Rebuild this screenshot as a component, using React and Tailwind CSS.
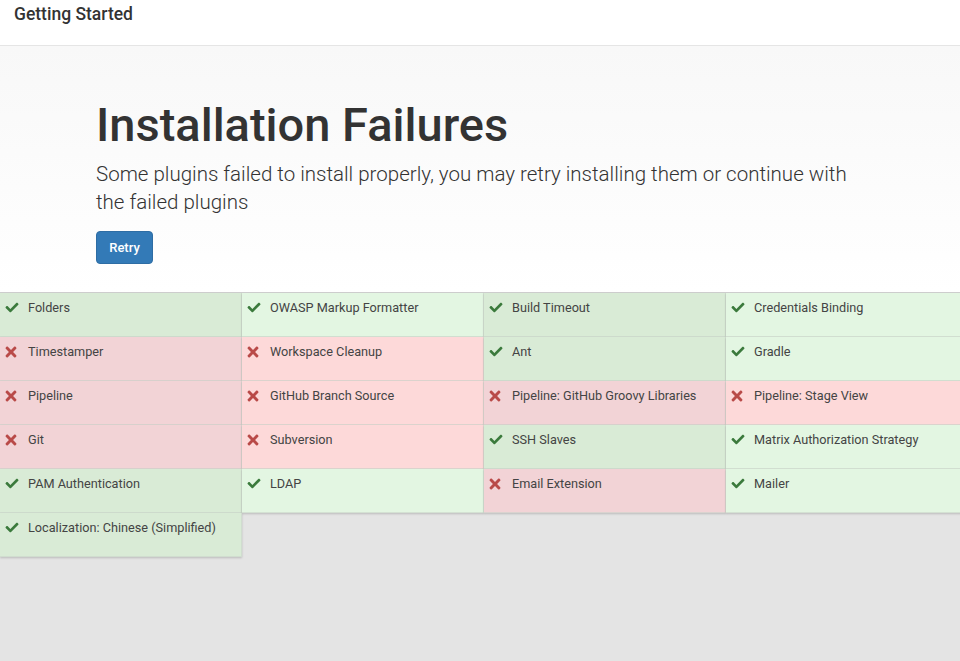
import React from "react";
import { FaCheck, FaTimes } from "react-icons/fa";

const plugins = [
  ["Folders", true], ["OWASP Markup Formatter", true], ["Build Timeout", true], ["Credentials Binding", true],
  ["Timestamper", false], ["Workspace Cleanup", false], ["Ant", true], ["Gradle", true],
  ["Pipeline", false], ["GitHub Branch Source", false], ["Pipeline: GitHub Groovy Libraries", false], ["Pipeline: Stage View", false],
  ["Git", false], ["Subversion", false], ["SSH Slaves", true], ["Matrix Authorization Strategy", true],
  ["PAM Authentication", true], ["LDAP", true], ["Email Extension", false], ["Mailer", true],
  ["Localization: Chinese (Simplified)", true],
];

function Cell({ name, ok, col }) {
  const even = col % 2 === 0;
  const bg = ok
    ? even ? "bg-[#d9ebd6]" : "bg-[#e3f6e2]"
    : even ? "bg-[#f2d3d6]" : "bg-[#fdd9d9]";
  return (
    <div className={`${bg} h-[44px] border-r border-b border-[#c9d3c9]/60 shadow-[0_1px_2px_rgba(0,0,0,0.18)] flex items-start pt-[7px] pl-[5px] text-[12.7px] leading-[15px] text-[#444]`}>
      <span className="w-[23px] flex-none h-[15px] flex items-center">
        {ok ? (
          <FaCheck className="text-[#3b7a3c] w-[14px] h-[13px]" />
        ) : (
          <FaTimes className="text-[#b94a48] w-[12px] h-[16px] ml-[0px]" />
        )}
      </span>
      <span className="whitespace-nowrap">{name}</span>
    </div>
  );
}

export default function App() {
  return (
    <div className="min-h-screen flex flex-col overflow-hidden bg-white" style={{ fontFamily: "Roboto, 'Liberation Sans', sans-serif" }}>
      <div className="h-[46px] flex-none border-b border-[#e5e5e5] flex items-start pl-[14px] pt-[3px]">
        <span className="text-[17.5px] font-medium text-[#333] leading-[22px]">Getting Started</span>
      </div>
      <div className="flex-none bg-gradient-to-b from-[#f8f8f8] to-white pl-[96px] pt-[51px] h-[246px]">
        <h1 className="text-[47px] leading-[56px] font-medium text-[#333]">Installation Failures</h1>
        <p className="mt-[7px] text-[20.5px] leading-[28px] font-light text-[#333] w-[770px]">
          Some plugins failed to install properly, you may retry installing them or continue with the failed plugins
        </p>
        <button className="mt-[15px] w-[57px] h-[33px] rounded-[4px] bg-[#337ab7] border border-[#2e6da4] text-white text-[13px] font-medium">
          Retry
        </button>
      </div>
      <div className="flex-1 bg-[#e4e4e4]">
        <div className="grid grid-cols-[242px_242px_242px_242px] w-[968px] border-t border-[#d0d0d0]">
          {plugins.map(([n, ok], i) => (
            <Cell key={n} name={n} ok={ok} col={i % 4} />
          ))}
        </div>
      </div>
    </div>
  );
}
